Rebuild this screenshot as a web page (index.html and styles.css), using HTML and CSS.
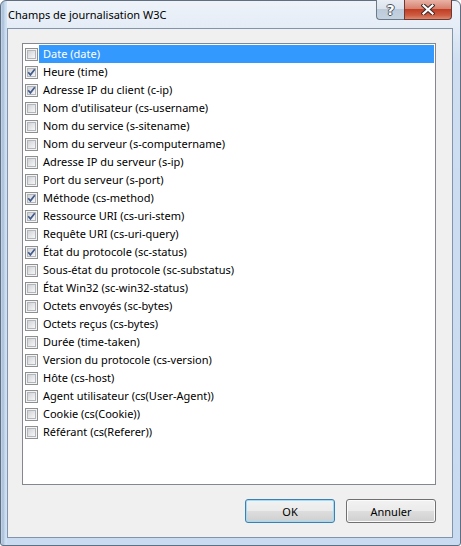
FILE: index.html
```html
<!DOCTYPE html>
<html lang="fr">
<head>
<meta charset="utf-8">
<title>Champs de journalisation W3C</title>
<link rel="stylesheet" href="styles.css">
</head>
<body>
<div class="window">
  <div class="titlebar">
    <span class="title">Champs de journalisation W3C</span>
  </div>
  <div class="caption-buttons">
    <div class="cap help"><span class="qmark">?</span></div>
    <div class="cap close">
      <svg width="14" height="11" viewBox="0 0 14 11">
        <path d="M2.5 1.5 L11.5 9.5 M11.5 1.5 L2.5 9.5" stroke="#3b2a2a" stroke-width="4.2" stroke-linecap="square" fill="none"/>
        <path d="M2.5 1.5 L11.5 9.5 M11.5 1.5 L2.5 9.5" stroke="#ffffff" stroke-width="2.2" stroke-linecap="square" fill="none"/>
      </svg>
    </div>
  </div>
  <div class="client">
    <div class="listbox">
      <div class="row selected"><span class="cb"></span><span class="label">Date (date)</span></div>
      <div class="row"><span class="cb checked"></span><span class="label">Heure (time)</span></div>
      <div class="row"><span class="cb checked"></span><span class="label">Adresse IP du client (c-ip)</span></div>
      <div class="row"><span class="cb"></span><span class="label">Nom d'utilisateur (cs-username)</span></div>
      <div class="row"><span class="cb"></span><span class="label">Nom du service (s-sitename)</span></div>
      <div class="row"><span class="cb"></span><span class="label">Nom du serveur (s-computername)</span></div>
      <div class="row"><span class="cb"></span><span class="label">Adresse IP du serveur (s-ip)</span></div>
      <div class="row"><span class="cb"></span><span class="label">Port du serveur (s-port)</span></div>
      <div class="row"><span class="cb checked"></span><span class="label">Méthode (cs-method)</span></div>
      <div class="row"><span class="cb checked"></span><span class="label">Ressource URI (cs-uri-stem)</span></div>
      <div class="row"><span class="cb"></span><span class="label">Requête URI (cs-uri-query)</span></div>
      <div class="row"><span class="cb checked"></span><span class="label">État du protocole (sc-status)</span></div>
      <div class="row"><span class="cb"></span><span class="label">Sous-état du protocole (sc-substatus)</span></div>
      <div class="row"><span class="cb"></span><span class="label">État Win32 (sc-win32-status)</span></div>
      <div class="row"><span class="cb"></span><span class="label">Octets envoyés (sc-bytes)</span></div>
      <div class="row"><span class="cb"></span><span class="label">Octets reçus (cs-bytes)</span></div>
      <div class="row"><span class="cb"></span><span class="label">Durée (time-taken)</span></div>
      <div class="row"><span class="cb"></span><span class="label">Version du protocole (cs-version)</span></div>
      <div class="row"><span class="cb"></span><span class="label">Hôte (cs-host)</span></div>
      <div class="row"><span class="cb"></span><span class="label">Agent utilisateur (cs(User-Agent))</span></div>
      <div class="row"><span class="cb"></span><span class="label">Cookie (cs(Cookie))</span></div>
      <div class="row"><span class="cb"></span><span class="label">Référant (cs(Referer))</span></div>
    </div>
    <div class="buttons">
      <button class="btn default">OK</button>
      <button class="btn">Annuler</button>
    </div>
  </div>
</div>
</body>
</html>
```

FILE: styles.css
```css
html, body {
  margin: 0;
  padding: 0;
  background: #ffffff;
}

body {
  font-family: "Noto Sans", "Open Sans", sans-serif;
  font-size: 11px;
  color: #000;
}

.window {
  position: relative;
  width: 461px;
  height: 546px;
  box-sizing: border-box;
  border: 1px solid #5f6e80;
  border-radius: 6px 6px 3px 3px;
  background:
    linear-gradient(to right, #c6d8ee 0px, #a9bdd6 2px, #c9dbf0 4px, #d3e2f4 6px, transparent 6px),
    linear-gradient(to bottom, #eef3f9 0px, #e4ecf6 27px, #cfdef1 60px, #c8dbf1 100%);
  display: flex;
  flex-direction: column;
  padding: 0 7px 7px 6px;
}

.titlebar {
  height: 27px;
  display: flex;
  align-items: center;
  padding-left: 1px;
  flex: none;
}

.title {
  font-size: 11px;
  color: #000;
  position: relative;
  top: 0px;
}

.caption-buttons {
  position: absolute;
  top: -1px;
  right: 8px;
  display: flex;
}

.cap {
  height: 20px;
  box-sizing: border-box;
  border: 1px solid #6d7a89;
  border-top: none;
  display: flex;
  align-items: center;
  justify-content: center;
}

.help {
  width: 28px;
  border-radius: 0 0 0 4px;
  border-right: none;
  background: linear-gradient(to bottom, #e9eef4 0%, #dbe3ec 45%, #bccada 50%, #c5d2e0 100%);
}

.qmark {
  font-family: "DejaVu Sans", sans-serif;
  font-weight: bold;
  font-size: 14px;
  color: #fff;
  line-height: 1;
  text-shadow: -1px 0 #4a5460, 1px 0 #4a5460, 0 -1px #4a5460, 0 1px #4a5460;
}

.close {
  width: 48px;
  border-radius: 0 0 4px 0;
  border-color: #6b3a34;
  background: linear-gradient(to bottom, #e9b3a6 0%, #d7826f 45%, #c13e25 50%, #cd5b40 80%, #dc8a70 100%);
}

.close svg {
  display: block;
}

.client {
  flex: 1;
  background: #f0f0f0;
  border: 1px solid #8294ab;
  display: flex;
  flex-direction: column;
  padding: 14px 16px 14px 14px;
}

.listbox {
  flex: 1;
  background: #ffffff;
  border: 1px solid #828790;
  padding: 1px 0 0 2px;
}

.row {
  height: 18px;
  display: flex;
  align-items: center;
}

.cb {
  position: relative;
  flex: none;
  width: 13px;
  height: 13px;
  box-sizing: border-box;
  border: 1px solid #8e8f8f;
  background: #f4f4f4;
  padding: 1px;
  margin-right: 1px;
}

.cb::before {
  content: "";
  display: block;
  width: 9px;
  height: 9px;
  box-sizing: border-box;
  border: 1px solid #b2b6bc;
  background: linear-gradient(135deg, #cfd2d6 0%, #e4e5e7 50%, #f7f7f7 100%);
}

.cb.checked::after {
  content: "";
  position: absolute;
  left: 1px;
  top: 1px;
  width: 9px;
  height: 9px;
  background: url("data:image/svg+xml;utf8,<svg xmlns='http://www.w3.org/2000/svg' width='9' height='9' viewBox='0 0 9 9'><path d='M1.2 4.3 L3.4 6.8 L7.8 1.2' stroke='%23425a8c' stroke-width='1.7' fill='none'/></svg>");
}

.label {
  flex: 1;
  height: 18px;
  line-height: 18px;
  padding-left: 4px;
  margin-right: 1px;
  white-space: nowrap;
}

.row.selected .label {
  background: #3399ff;
  color: #ffffff;
}

.buttons {
  display: flex;
  justify-content: flex-end;
  gap: 11px;
  margin-top: 14px;
  flex: none;
}

.btn {
  width: 90px;
  height: 24px;
  font-family: "Noto Sans", "Open Sans", sans-serif;
  font-size: 11px;
  color: #000;
  border: 1px solid #707070;
  border-radius: 3px;
  background: linear-gradient(to bottom, #f2f2f2 0%, #ebebeb 48%, #dddddd 52%, #cfcfcf 100%);
  box-shadow: inset 0 0 0 1px #fbfbfb;
  padding: 0;
}

.btn.default {
  border-color: #3c7fb1;
  box-shadow: inset 0 0 0 1px #9fdcf8;
}
```
